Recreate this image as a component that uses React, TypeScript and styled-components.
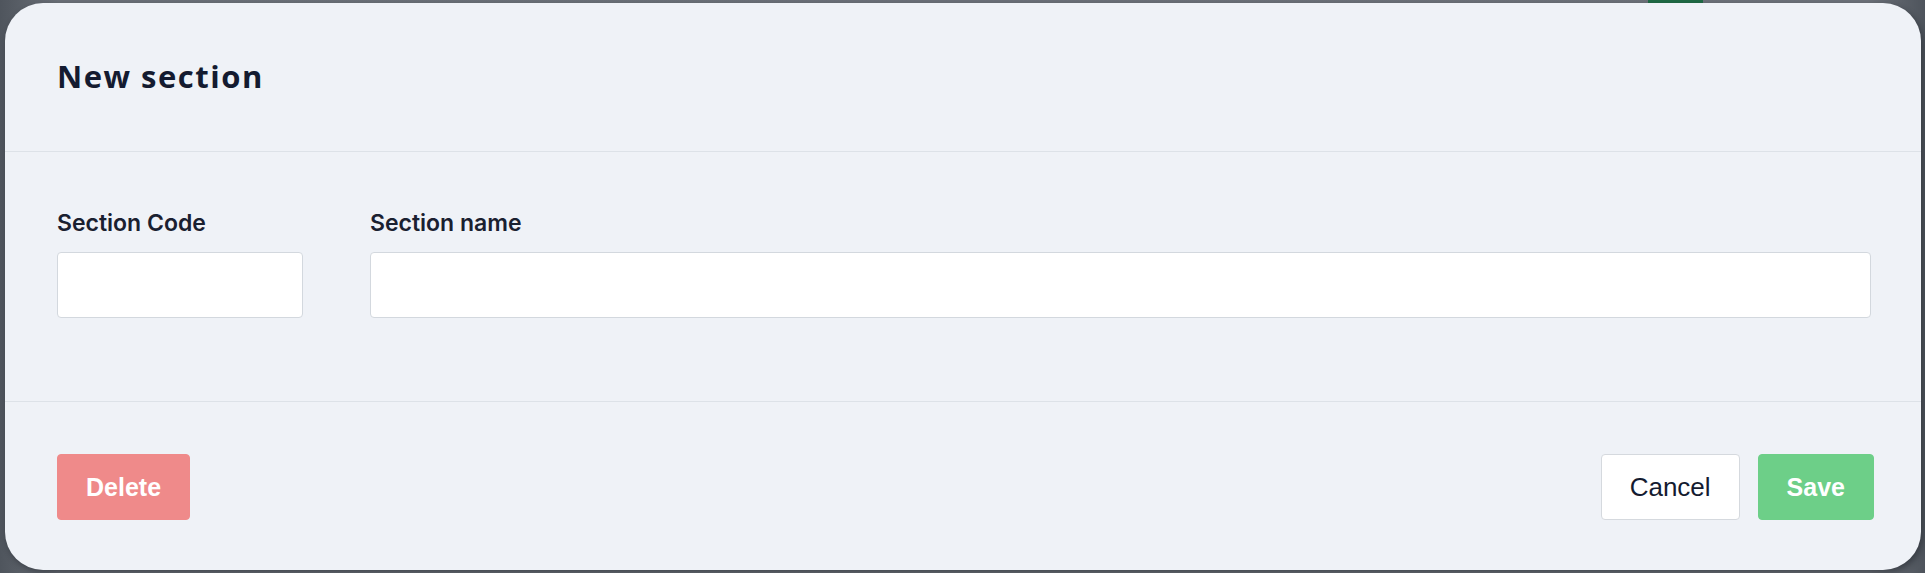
import React from 'react';
import styled, { createGlobalStyle } from 'styled-components';

const GlobalStyle = createGlobalStyle`
    html, body {
        margin: 0;
        padding: 0;
        height: 573px;
        overflow: hidden;
    }
    body {
        background: linear-gradient(90deg, #4f555d 0%, #6a6f77 3%, #6c7179 97%, #4e545c 100%);
        font-family: Inter, "Liberation Sans", sans-serif;
    }
`;

const Backdrop = styled.div`
    position: relative;
    height: 573px;
    padding: 3px 4px 3px 5px;
    box-sizing: border-box;
`;

const TopTab = styled.div`
    position: absolute;
    top: 0;
    left: 1648px;
    width: 55px;
    height: 3px;
    background: #1f6a45;
`;

const Modal = styled.div`
    position: relative;
    display: flex;
    flex-direction: column;
    height: 100%;
    background: #eff2f7;
    border-radius: 38px;
    box-shadow: 2px 3px 6px rgba(20, 24, 30, 0.45);
    overflow: hidden;
`;

const Header = styled.div`
    display: flex;
    align-items: center;
    height: 149px;
    padding: 0 50px 2px 52px;
    border-bottom: 1px solid #dde2e8;
    box-sizing: border-box;
`;

const Title = styled.h2`
    margin: 0;
    font-family: "Open Sans", sans-serif;
    font-weight: 700;
    font-size: 31px;
    letter-spacing: 1.5px;
    color: #141b30;
`;

const Body = styled.div`
    display: flex;
    gap: 67px;
    padding: 57px 50px 0 52px;
    height: 250px;
    border-bottom: 1px solid #dde2e8;
    box-sizing: border-box;
`;

const Field = styled.div<{ $grow?: boolean }>`
    display: flex;
    flex-direction: column;
    width: ${props => (props.$grow ? 'auto' : '246px')};
    flex: ${props => (props.$grow ? 1 : '0 0 auto')};
`;

const Label = styled.label`
    font-family: Inter, sans-serif;
    font-weight: 600;
    font-size: 23px;
    line-height: 28px;
    color: #1a2030;
    margin-bottom: 15px;
`;

const Input = styled.input`
    height: 66px;
    box-sizing: border-box;
    border: 1.5px solid #d3d8de;
    border-radius: 4px;
    background: #ffffff;
    font-size: 22px;
    padding: 0 14px;
    outline: none;
`;

const Footer = styled.div`
    display: flex;
    align-items: center;
    justify-content: space-between;
    flex: 1;
    padding: 2px 47px 0 52px;
`;

const Actions = styled.div`
    display: flex;
    gap: 18px;
`;

const Button = styled.button<{ $variant: 'danger' | 'default' | 'success' }>`
    height: 66px;
    padding: 0 28px;
    border-radius: 4px;
    font-family: "Liberation Sans", Arial, sans-serif;
    font-size: ${props => (props.$variant === 'default' ? '26px' : '25px')};
    font-weight: ${props => (props.$variant === 'default' ? 400 : 700)};
    cursor: pointer;
    border: 1.5px solid
        ${props =>
            props.$variant === 'danger'
                ? '#ef8a8a'
                : props.$variant === 'success'
                ? '#6dcf88'
                : '#d5d9de'};
    background: ${props =>
        props.$variant === 'danger'
            ? '#ef8a8a'
            : props.$variant === 'success'
            ? '#6dcf88'
            : '#ffffff'};
    color: ${props => (props.$variant === 'default' ? '#141b30' : '#ffffff')};
`;

const App = () => (
    <>
        <GlobalStyle />
        <Backdrop>
            <TopTab />
            <Modal>
                <Header>
                    <Title>New section</Title>
                </Header>
                <Body>
                    <Field>
                        <Label>Section Code</Label>
                        <Input />
                    </Field>
                    <Field $grow>
                        <Label>Section name</Label>
                        <Input />
                    </Field>
                </Body>
                <Footer>
                    <Button $variant="danger">Delete</Button>
                    <Actions>
                        <Button $variant="default">Cancel</Button>
                        <Button $variant="success">Save</Button>
                    </Actions>
                </Footer>
            </Modal>
        </Backdrop>
    </>
);

export default App;
